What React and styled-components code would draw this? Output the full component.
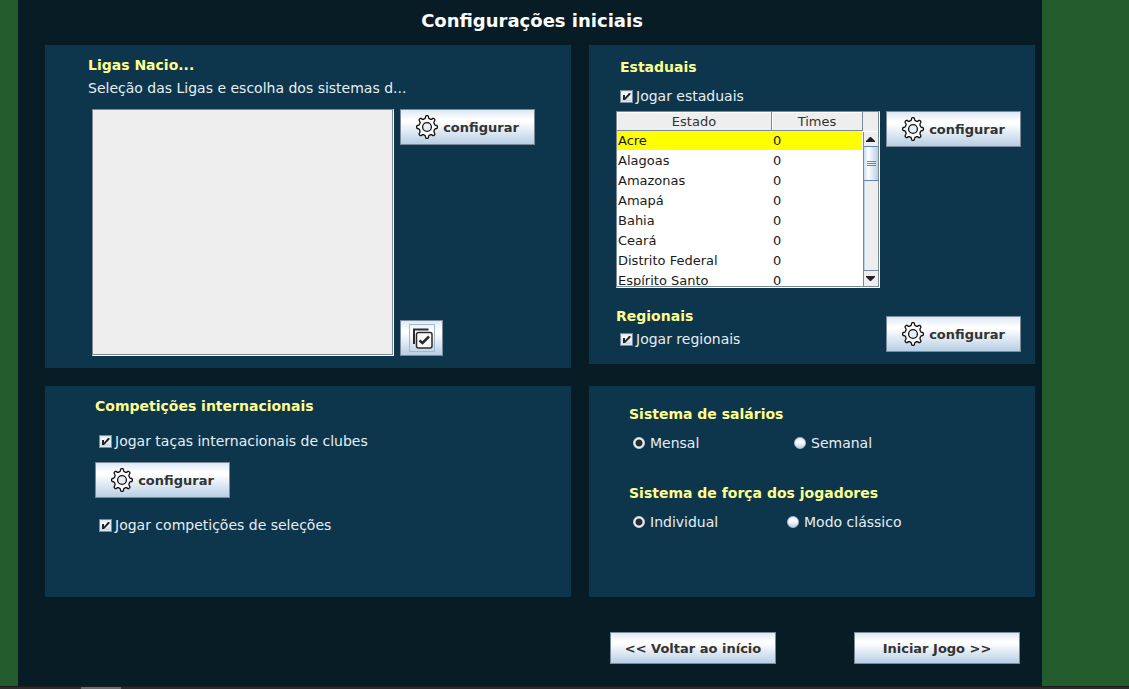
import React from "react";
import styled, { createGlobalStyle, css } from "styled-components";

const GlobalStyle = createGlobalStyle`
  * { box-sizing: border-box; }
  body {
    margin: 0;
    background: #245b2d;
    color: #e6eef2;
    font-family: "DejaVu Sans", Verdana, sans-serif;
    font-size: 14px;
  }
`;

const Page = styled.div`
  display: flex;
  flex-direction: column;
  min-height: 100vh;
`;

const Window = styled.main`
  flex: 1;
  margin: 0 87px 0 18px;
  padding: 9px 7px 22px 27px;
  background: #081c26;
`;

const Title = styled.h1`
  margin: 0 0 12px;
  padding-right: 16px;
  color: #ffffff;
  font-size: 18px;
  line-height: 24px;
  text-align: center;
`;

const Panels = styled.div`
  display: grid;
  grid-template-columns: minmax(0, 526fr) minmax(0, 446fr);
  gap: 18px;
  align-items: start;
`;

const Panel = styled.section`
  padding: ${(p) => p.$pad};
  background: #0d364d;
`;

const Heading = styled.h2`
  margin: 0;
  padding-left: ${(p) => (p.$inset ? "4px" : "0")};
  color: #ffff8c;
  font-size: 14px;
  line-height: 24px;
`;

const Description = styled.p`
  margin: 0 0 10px;
  line-height: 22px;
`;

const LeagueArea = styled.div`
  display: flex;
  gap: 6px;
  height: 247px;
  padding-left: 4px;
`;

const sunken = css`
  border: 1px solid #7a8a99;
  border-right-color: #ffffff;
  border-bottom-color: #ffffff;
  box-shadow: inset -1px -1px 0 #7a8a99;
`;

const LeagueList = styled.div`
  ${sunken}
  flex: 1;
  background: #eeeeee;
`;

const ButtonColumn = styled.div`
  display: flex;
  flex-direction: column;
  justify-content: space-between;
  align-items: flex-start;
`;

const Button = styled.button`
  display: inline-flex;
  flex: none;
  align-items: center;
  justify-content: center;
  gap: 5px;
  width: ${(p) => p.$width || "135px"};
  height: ${(p) => p.$height || "36px"};
  padding: 0;
  border: 1px solid #7a8a99;
  background: linear-gradient(#dde8f3 0%, #ffffff 28%, #ffffff 34%, #b8cfe5 100%);
  color: #333333;
  font: bold 13px "DejaVu Sans", Verdana, sans-serif;
`;

const FocusBox = styled.span`
  display: flex;
  align-items: center;
  justify-content: center;
  width: 26px;
  height: 28px;
  border: 1px solid #a3b8cc;
`;

const OptionLabel = styled.label`
  display: flex;
  align-items: center;
  gap: ${(p) => p.$gap || "3px"};
  margin-top: ${(p) => p.$top || "0"};
  padding-left: 4px;
  line-height: 20px;
`;

const BoxHolder = styled.span`
  position: relative;
  display: flex;
  flex: none;

  svg {
    position: absolute;
    inset: 0;
    visibility: hidden;
    pointer-events: none;
  }
  input:checked + svg { visibility: visible; }
`;

const Tick = styled.input`
  appearance: none;
  width: 13px;
  height: 13px;
  margin: 0;
  border: 1px solid #7a8a99;
  background: linear-gradient(#dde8f3, #ffffff 35%, #b8cfe5);
  box-shadow: inset 0 0 0 1px #dfe9f3;
`;

const Radio = styled.input`
  appearance: none;
  width: 12px;
  height: 12px;
  margin: 0;
  border: 1px solid #a9bac9;
  border-radius: 50%;
  background: linear-gradient(#e4edf6, #ffffff 40%, #c0d4e8);

  &:checked {
    border-color: #c3d2e0;
    background: radial-gradient(circle, #2b2b2b 0 3px, #eef4fa 4px);
  }
`;

const RadioRow = styled.div`
  display: grid;
  grid-template-columns: ${(p) => p.$first} 1fr;
  margin: 7px 0 ${(p) => p.$bottom || "0"};
`;

const StateArea = styled.div`
  display: flex;
  align-items: flex-start;
  gap: 6px;
  margin: 5px 0 16px;
`;

const StateFrame = styled.div`
  ${sunken}
  display: flex;
  flex: 1;
  height: 177px;
  padding: 0 1px 1px 0;
  background: #ffffff;
`;

const TableView = styled.div`
  flex: 1;
  overflow: hidden;
`;

const Table = styled.table`
  width: 100%;
  border-collapse: separate;
  border-spacing: 0;
  table-layout: fixed;
  color: #1a1a1a;
  font-size: 13px;
`;

const HeadCell = styled.th`
  width: ${(p) => p.$width};
  height: 19px;
  padding: 1px 0 0;
  border: solid #7a8a99;
  border-width: 0 1px 1px 0;
  background: #eeeeee;
  box-shadow: inset 1px 1px 0 #ffffff;
  color: #333333;
  font-weight: normal;
  line-height: 17px;
`;

const Cell = styled.td`
  height: 20px;
  padding: 1px 1px 0;
  border: solid #ffffff;
  border-width: 0 1px 1px 0;
  background: ${(p) => (p.$selected ? "#ffff00" : "#ffffff")};
  line-height: 18px;
`;

const ScrollColumn = styled.div`
  display: flex;
  flex-direction: column;
  width: 15px;
  background: #eeeeee;
`;

const Corner = styled.div`
  height: 20px;
  border-bottom: 1px solid #ffffff;
`;

const ScrollTrack = styled.div`
  display: flex;
  flex: 1;
  flex-direction: column;
  border-left: 1px solid #7a8a99;
`;

const Arrow = styled.button`
  display: flex;
  align-items: center;
  justify-content: center;
  height: ${(p) => (p.$down ? "16px" : "14px")};
  padding: 0 2px 0 0;
  border: 0 solid #7a8a99;
  border-top-width: ${(p) => (p.$down ? "1px" : "0")};
  background: #eeeeee;
`;

const Thumb = styled.div`
  display: flex;
  align-items: center;
  justify-content: center;
  height: 35px;
  border: solid #6382bf;
  border-width: 1px 0;
  background: linear-gradient(90deg, #c8dbee, #ffffff 30%, #b8cfe5);
`;

const Trough = styled.div`
  flex: 1;
  border-left: 1px solid #b8cfe5;
`;

const RegionalRow = styled.div`
  display: flex;
  align-items: flex-end;
  justify-content: space-between;
  height: 48px;
`;

const RegionalText = styled.div`
  align-self: flex-start;
`;

const InternationalButton = styled.div`
  display: flex;
  margin: 11px 0 17px;
`;

const Footer = styled.footer`
  display: flex;
  justify-content: flex-end;
  gap: 78px;
  margin-top: 35px;
  padding-right: 15px;
`;

const BottomBar = styled.div`
  height: 3px;
  padding-left: 81px;
  border-top: 1px solid #1c1e1e;
  background: #2e2a2b;
`;

const BottomThumb = styled.div`
  width: 40px;
  height: 2px;
  background: #6c696a;
`;

function gearOutline() {
  const profile = [[-17, 8.7], [-12, 9.1], [-8, 10.8], [-4, 11.4], [4, 11.4], [8, 10.8], [12, 9.1], [17, 8.7]];
  const points = [];
  for (let i = 0; i < 8; i += 1) {
    profile.forEach(([offset, r]) => {
      const a = ((i * 45 + offset - 90) * Math.PI) / 180;
      points.push(`${(11 + Math.cos(a) * r * 0.91).toFixed(2)} ${(12 + Math.sin(a) * r).toFixed(2)}`);
    });
  }
  return `M${points.join("L")}Z`;
}

const GEAR = gearOutline();

function ConfigureButton() {
  return (
    <Button type="button">
      <svg width="22" height="24" viewBox="0 0 22 24" fill="#fafafa" stroke="#111" strokeWidth="1.3" strokeLinejoin="round" aria-hidden="true">
        <path d={GEAR} />
        <circle cx="11" cy="12" r="4.4" fill="#e6eef7" />
      </svg>
      configurar
    </Button>
  );
}

function CheckOption({ children, top }) {
  return (
    <OptionLabel $top={top}>
      <BoxHolder>
        <Tick type="checkbox" defaultChecked />
        <svg width="13" height="13" viewBox="0 0 13 13" aria-hidden="true">
          <path d="M3 5H5V7.5L9 3H10.5V4.5L5 10H3Z" fill="#222" />
        </svg>
      </BoxHolder>
      {children}
    </OptionLabel>
  );
}

function RadioOption({ name, children, checked }) {
  return (
    <OptionLabel $gap="5px">
      <Radio type="radio" name={name} defaultChecked={checked} />
      {children}
    </OptionLabel>
  );
}

const STATES = ["Acre", "Alagoas", "Amazonas", "Amapá", "Bahia", "Ceará", "Distrito Federal", "Espírito Santo"];

function StateTable() {
  return (
    <StateFrame>
      <TableView>
        <Table>
          <thead>
            <tr>
              <HeadCell $width="63%">Estado</HeadCell>
              <HeadCell>Times</HeadCell>
            </tr>
          </thead>
          <tbody>
            {STATES.map((state, i) => (
              <tr key={state}>
                <Cell $selected={i === 0}>{state}</Cell>
                <Cell $selected={i === 0}>0</Cell>
              </tr>
            ))}
          </tbody>
        </Table>
      </TableView>
      <ScrollColumn>
        <Corner />
        <ScrollTrack>
          <Arrow type="button" aria-label="Rolar para cima">
            <svg width="9" height="5" viewBox="0 0 9 5"><path d="M4 0H5L9 4V5H0V4Z" fill="#222" /></svg>
          </Arrow>
          <Thumb>
            <svg width="9" height="6" viewBox="0 0 9 6"><path d="M0 .5H9M0 2.5H9M0 4.5H9" stroke="#6382bf" /></svg>
          </Thumb>
          <Trough />
          <Arrow type="button" $down aria-label="Rolar para baixo">
            <svg width="9" height="5" viewBox="0 0 9 5"><path d="M0 0H9V1L5 5H4L0 1Z" fill="#222" /></svg>
          </Arrow>
        </ScrollTrack>
      </ScrollColumn>
    </StateFrame>
  );
}

export default function App() {
  return (
    <Page>
      <GlobalStyle />
      <Window>
        <Title>Configurações iniciais</Title>
        <Panels>
          <Panel $pad="8px 36px 12px 43px">
            <Heading>Ligas Nacio...</Heading>
            <Description>Seleção das Ligas e escolha dos sistemas d...</Description>
            <LeagueArea>
              <LeagueList />
              <ButtonColumn>
                <ConfigureButton />
                <Button type="button" $width="43px" aria-label="Selecionar todas">
                  <FocusBox>
                    <svg width="22" height="22" viewBox="0 0 22 22" fill="none" stroke="#2b2b2b" aria-hidden="true">
                      <path d="M3 17V2.5H17.5" strokeWidth="2" />
                      <rect x="5.5" y="5.5" width="15.5" height="15.5" rx="2" strokeWidth="1.5" fill="#fafafa" />
                      <path d="M8.5 13.5L11.5 16L18 9.5" strokeWidth="2.6" />
                    </svg>
                  </FocusBox>
                </Button>
              </ButtonColumn>
            </LeagueArea>
          </Panel>

          <Panel $pad="10px 14px 12px 27px">
            <Heading $inset>Estaduais</Heading>
            <CheckOption top="7px">Jogar estaduais</CheckOption>
            <StateArea>
              <StateTable />
              <ConfigureButton />
            </StateArea>
            <RegionalRow>
              <RegionalText>
                <Heading>Regionais</Heading>
                <CheckOption top="1px">Jogar regionais</CheckOption>
              </RegionalText>
              <ConfigureButton />
            </RegionalRow>
          </Panel>

          <Panel $pad="8px 36px 62px 50px">
            <Heading>Competições internacionais</Heading>
            <CheckOption top="13px">Jogar taças internacionais de clubes</CheckOption>
            <InternationalButton>
              <ConfigureButton />
            </InternationalButton>
            <CheckOption>Jogar competições de seleções</CheckOption>
          </Panel>

          <Panel $pad="16px 14px 65px 40px">
            <Heading>Sistema de salários</Heading>
            <RadioRow $first="161px" $bottom="28px">
              <RadioOption name="salarios" checked>Mensal</RadioOption>
              <RadioOption name="salarios">Semanal</RadioOption>
            </RadioRow>
            <Heading>Sistema de força dos jogadores</Heading>
            <RadioRow $first="154px">
              <RadioOption name="forca" checked>Individual</RadioOption>
              <RadioOption name="forca">Modo clássico</RadioOption>
            </RadioRow>
          </Panel>
        </Panels>
        <Footer>
          <Button type="button" $width="166px" $height="32px">&lt;&lt; Voltar ao início</Button>
          <Button type="button" $width="166px" $height="32px">Iniciar Jogo &gt;&gt;</Button>
        </Footer>
      </Window>
      <BottomBar>
        <BottomThumb />
      </BottomBar>
    </Page>
  );
}
